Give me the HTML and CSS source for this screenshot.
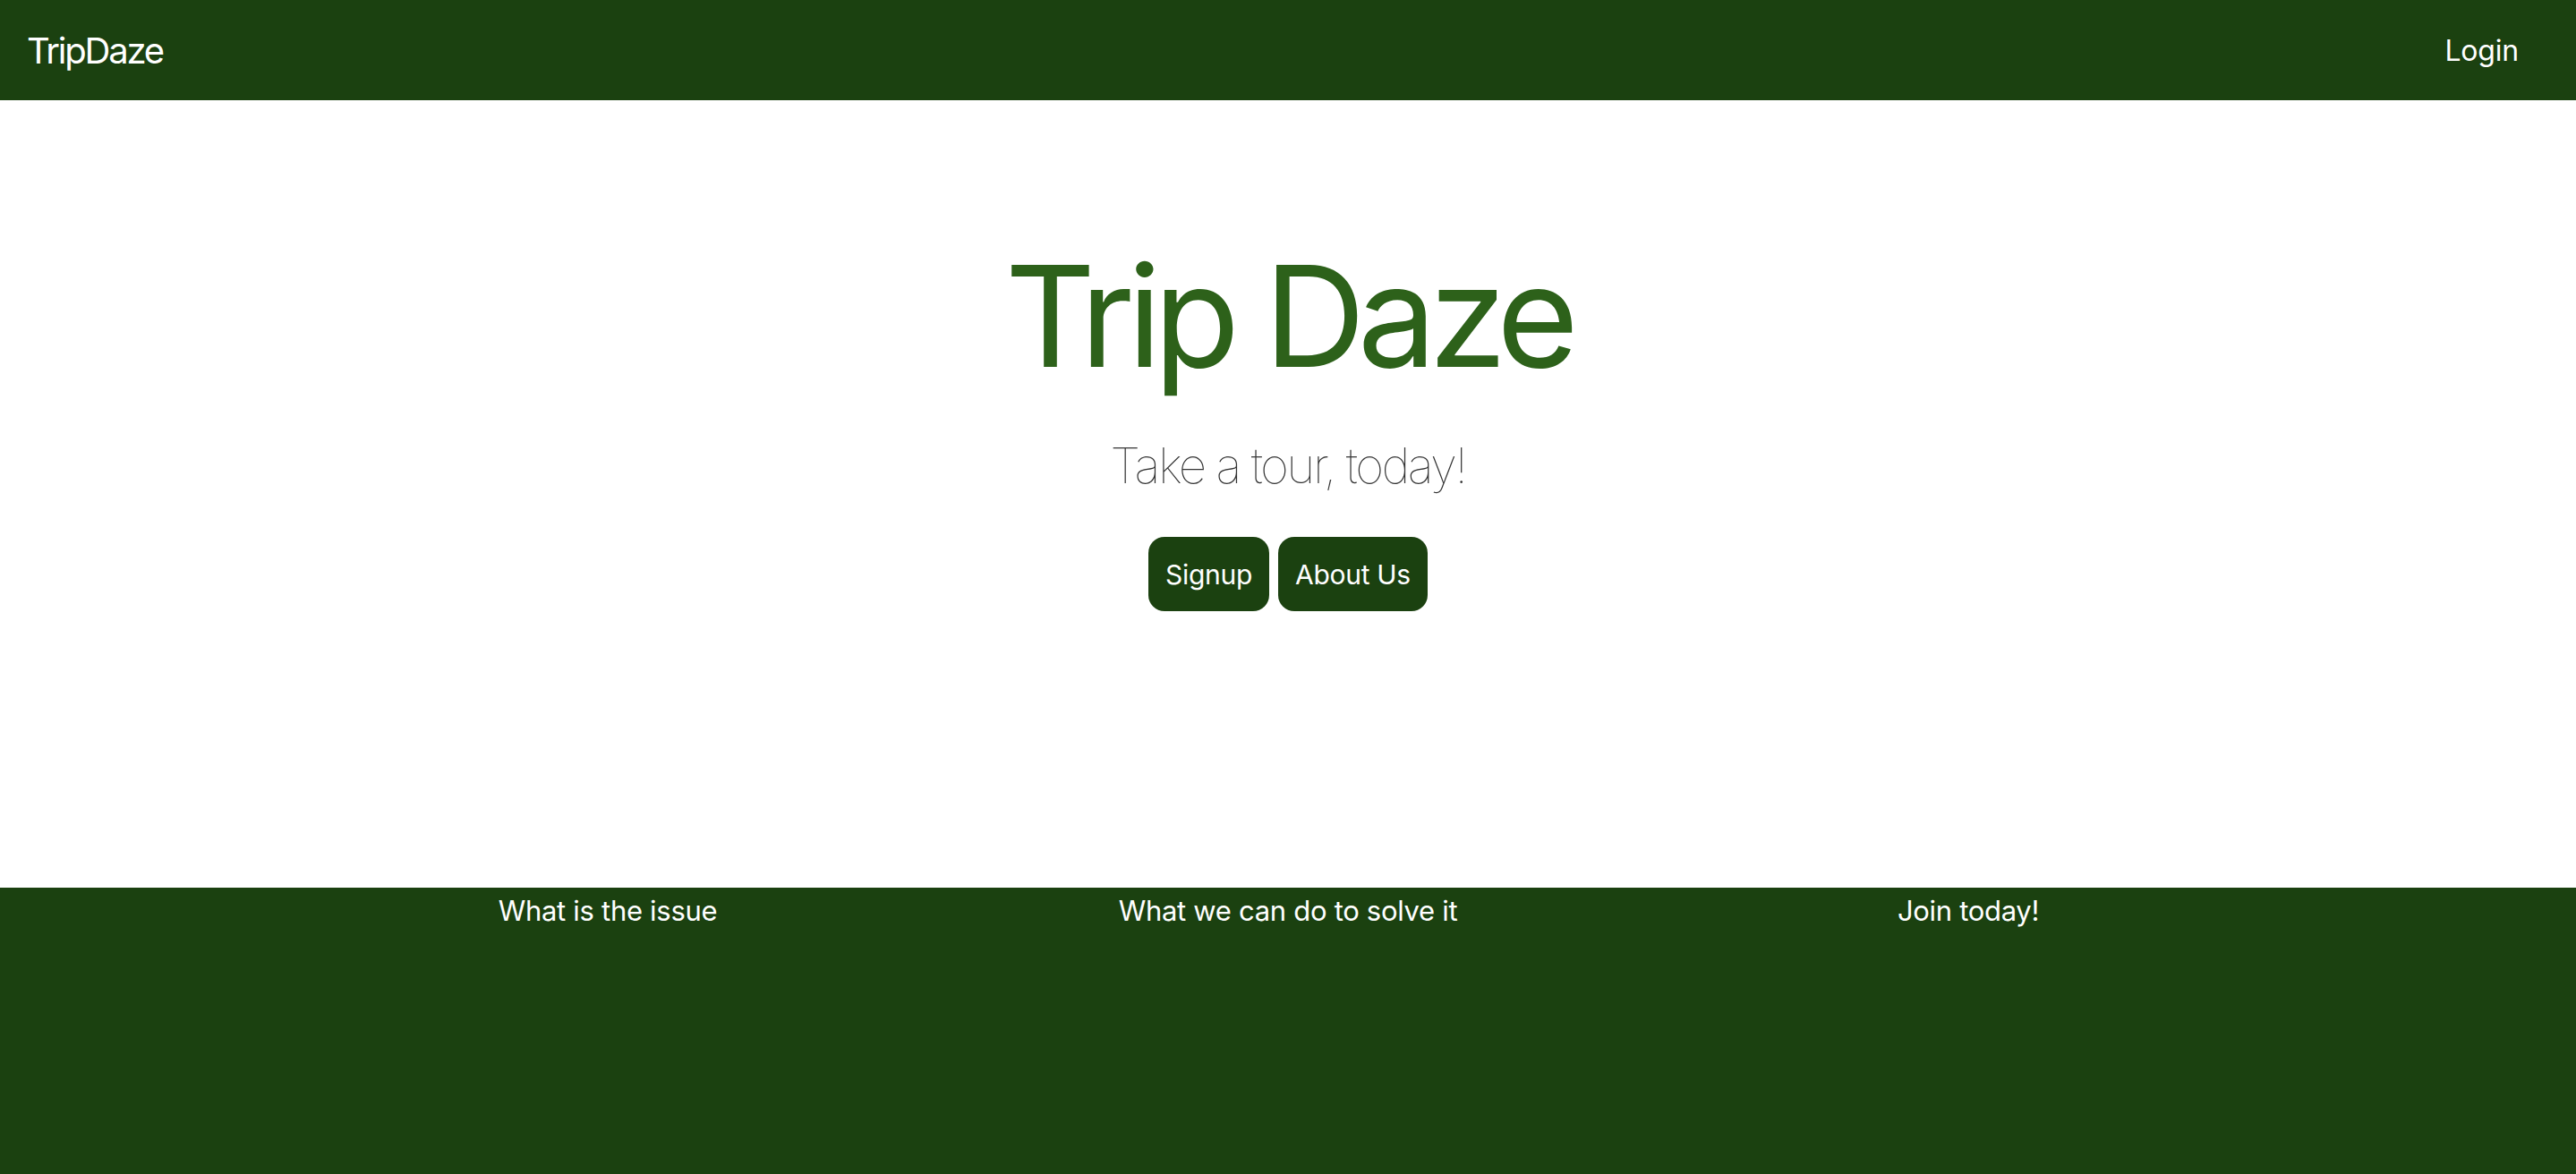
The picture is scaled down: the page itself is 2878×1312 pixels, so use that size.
FILE: index.html
```html
<!DOCTYPE html>
<html lang="en">
<head>
<meta charset="utf-8">
<title>TripDaze</title>
<link rel="stylesheet" href="styles.css">
</head>
<body>
<div class="page">
  <nav class="navbar">
    <a class="brand" href="#">TripDaze</a>
    <a class="nav-link" href="#">Login</a>
  </nav>
  <section class="hero">
    <h1 class="hero-title">Trip Daze</h1>
    <p class="hero-lead">Take a tour, today!</p>
    <div class="hero-actions">
      <a class="btn" href="#">Signup</a>
      <a class="btn" href="#">About Us</a>
    </div>
  </section>
  <footer class="footer">
    <div class="footer-row">
      <div class="footer-col">What is the issue</div>
      <div class="footer-col">What we can do to solve it</div>
      <div class="footer-col">Join today!</div>
    </div>
  </footer>
</div>
</body>
</html>
```
FILE: styles.css
```css
html, body {
  margin: 0;
  padding: 0;
  height: 100%;
}

body {
  font-family: Inter, "Liberation Sans", sans-serif;
  background: #ffffff;
  color: #212529;
}

.page {
  display: grid;
  grid-template-rows: 112px 880px 1fr;
  height: 100vh;
}

.navbar {
  background: #1b4110;
  display: flex;
  align-items: center;
  justify-content: space-between;
  padding: 0 64px 0 30px;
}

.brand {
  color: #ffffff;
  text-decoration: none;
  font-size: 40px;
  letter-spacing: -2.2px;
}

.nav-link {
  color: #ffffff;
  text-decoration: none;
  font-size: 32px;
  letter-spacing: -0.2px;
}

.hero {
  display: flex;
  flex-direction: column;
  align-items: center;
  padding-top: 147px;
}

.hero-title {
  margin: 0;
  font-size: 157px;
  line-height: 188px;
  font-weight: 400;
  color: #2d611a;
  letter-spacing: -8.6px;
}

.hero-lead {
  margin: 40px 0 0;
  font-size: 55px;
  line-height: 67px;
  font-weight: 100;
  color: #333333;
  letter-spacing: -2.6px;
}

.hero-actions {
  display: flex;
  gap: 10px;
  margin-top: 46px;
}

.btn {
  display: flex;
  align-items: center;
  height: 83px;
  padding: 0 19px;
  box-sizing: border-box;
  background: #1b4110;
  color: #ffffff;
  border-radius: 18px;
  text-decoration: none;
  font-size: 30px;
  letter-spacing: -0.3px;
}

.footer {
  background: #1b4110;
  color: #ffffff;
  padding-top: 2px;
}

.footer-row {
  width: 2280px;
  margin: 0 auto;
  display: grid;
  grid-template-columns: repeat(3, 1fr);
}

.footer-col {
  text-align: center;
  font-size: 31px;
  line-height: 48px;
  letter-spacing: -0.3px;
}
```
